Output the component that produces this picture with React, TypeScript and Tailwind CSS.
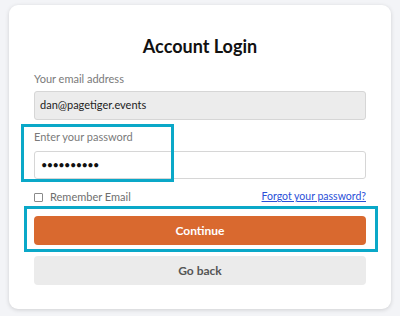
export default function App() {
  return (
    <div className="w-[400px] h-[316px] bg-[#f3f4f7] pt-[5px] px-[9px] font-['Lato',sans-serif]">
      <div className="relative h-[304px] bg-white rounded-[9px] shadow-[0_1px_4px_rgba(0,0,0,0.15)] px-[25px] pt-[29px]">
        <h1 className="text-center text-[18px] leading-[24px] font-bold text-[#111]">Account Login</h1>

        <p className="mt-[13px] text-[11px] leading-[16px] text-[#7a7a7a]">Your email address</p>
        <div className="mt-[4px] h-[29px] rounded-[3px] border border-[#d6d6d6] bg-[#ececec] px-[5px] flex items-center text-[11px] text-[#222]">
          dan@pagetiger.events
        </div>

        <p className="mt-[9px] text-[11px] leading-[16px] text-[#7a7a7a]">Enter your password</p>
        <div className="mt-[6px] h-[28px] rounded-[3px] border border-[#d6d6d6] bg-white px-[6px] flex items-center text-[11px] tracking-[-0.6px] text-[#111]">
          ••••••••••
        </div>

        <div className="mt-[10px] h-[16px] flex items-center justify-between">
          <label className="flex items-center gap-[7px] text-[11px] text-[#6e6e6e]">
            <span className="w-[9px] h-[9px] border border-[#8a8a8a] rounded-[1px] bg-white" />
            Remember Email
          </label>
          <a className="text-[10.5px] text-[#2a4fd8] underline">Forgot your password?</a>
        </div>

        <button className="mt-[11px] w-full h-[29px] rounded-[4px] bg-[#d9692f] text-white text-[12px] font-bold">
          Continue
        </button>
        <button className="mt-[11px] w-full h-[29px] rounded-[4px] bg-[#ebebeb] text-[#555] text-[12px] font-bold">
          Go back
        </button>

        <div className="absolute left-[12px] top-[119px] w-[153px] h-[58px] border-[3px] border-[#0aa8c8]" />
        <div className="absolute left-[15px] top-[201px] w-[354px] h-[46px] border-[3px] border-[#0aa8c8]" />
      </div>
    </div>
  );
}
